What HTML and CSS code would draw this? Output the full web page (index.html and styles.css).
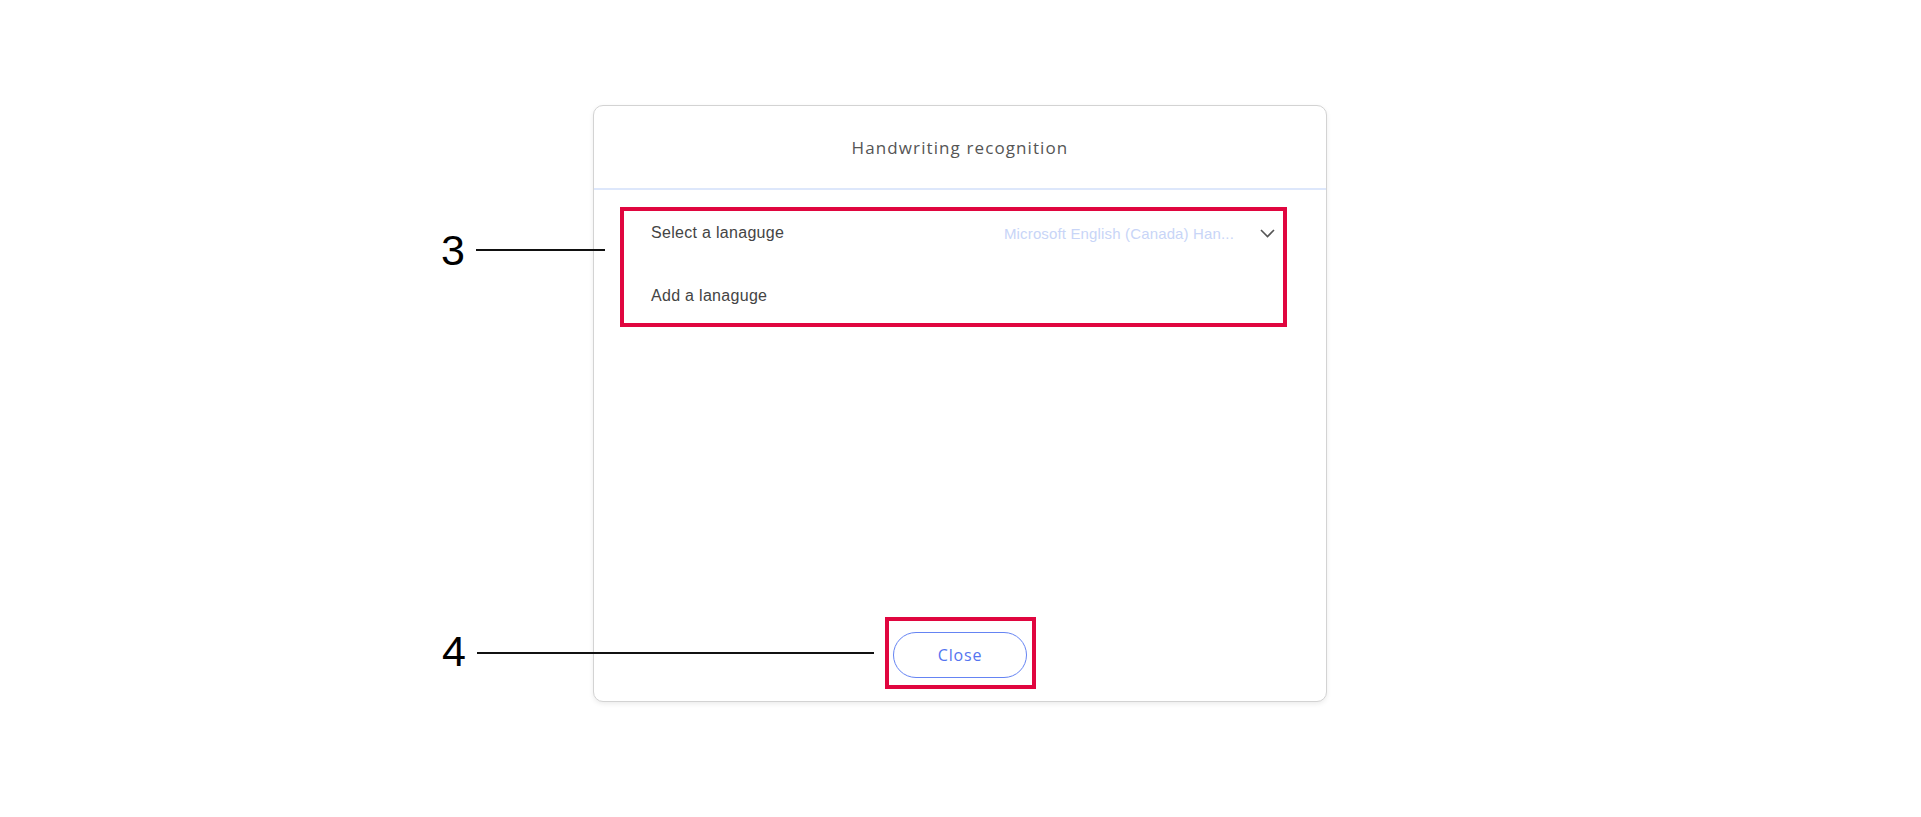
FILE: index.html
```html
<!DOCTYPE html>
<html lang="en">
<head>
    <meta charset="UTF-8">
    <meta name="viewport" content="width=device-width, initial-scale=1.0">
    <title>Handwriting recognition</title>
    <link rel="stylesheet" href="styles.css">
</head>
<body>
    <div class="stage">
        <div class="dialog">
            <div class="dialog-header">
                <h2>Handwriting recognition</h2>
            </div>

            <div class="dialog-body">
                <div class="highlight language-list">
                    <div class="row">
                        <span class="row-label">Select a lanaguge</span>
                        <span class="row-value">Microsoft English (Canada) Han...</span>
                        <svg class="chevron" width="15" height="9" viewBox="0 0 15 9">
                            <path d="M1 1 L7.5 7.5 L14 1" fill="none" stroke="#555" stroke-width="1.6"/>
                        </svg>
                    </div>
                    <div class="row">
                        <span class="row-label">Add a lanaguge</span>
                    </div>
                </div>
            </div>

            <div class="dialog-footer">
                <div class="highlight close-wrap">
                    <button type="button" class="btn-close">Close</button>
                </div>
            </div>
        </div>

        <!-- callouts -->
        <div class="callout callout-3">
            <span class="callout-num">3</span>
            <span class="leader leader-short"></span>
        </div>
        <div class="callout callout-4">
            <span class="callout-num">4</span>
            <span class="leader leader-long"></span>
        </div>
    </div>
</body>
</html>
```

FILE: styles.css
```css
body {
    margin: 0;
    background: #ffffff;
    font-family: "Liberation Sans", Arial, sans-serif;
}

.stage {
    position: relative;
    height: 817px;
    padding: 105px 0 0 593px;
    box-sizing: border-box;
}

.dialog {
    width: 734px;
    height: 597px;
    box-sizing: border-box;
    border: 1px solid #d3d3d3;
    border-radius: 10px;
    box-shadow: 0 2px 5px rgba(0, 0, 0, 0.08);
    display: flex;
    flex-direction: column;
    background: #ffffff;
}

.dialog-header {
    height: 82px;
    border-bottom: 2px solid #dde7fb;
    display: flex;
    align-items: center;
    justify-content: center;
}

.dialog-header h2 {
    margin: 0;
    font-family: "Open Sans", sans-serif;
    font-weight: 400;
    font-size: 17px;
    letter-spacing: 1.1px;
    color: #555555;
}

.dialog-body {
    padding: 17px 39px 0 26px;
}

.highlight {
    border: 4px solid #e0063f;
}

.language-list {
    height: 120px;
    box-sizing: border-box;
    padding-right: 8px;
}

.row {
    height: 44px;
    display: flex;
    align-items: center;
    padding-left: 27px;
    margin-bottom: 19px;
}

.row-label {
    font-size: 16px;
    letter-spacing: 0.3px;
    color: #444444;
}

.row-value {
    margin-left: auto;
    font-size: 15px;
    letter-spacing: 0.15px;
    color: #c8d5f7;
}

.chevron {
    margin-left: 26px;
}

.dialog-footer {
    margin-top: auto;
    padding-bottom: 12px;
    display: flex;
    justify-content: center;
}

.close-wrap {
    padding: 11px 5px 7px 4px;
    margin-left: 1px;
}

.btn-close {
    width: 134px;
    height: 46px;
    border: 1.5px solid #6584f3;
    border-radius: 23px;
    background: #ffffff;
    color: #5474f0;
    font-family: "Open Sans", sans-serif;
    font-size: 16px;
    letter-spacing: 0.8px;
    cursor: pointer;
}

.callout {
    position: absolute;
    display: flex;
    align-items: center;
    height: 50px;
}

.callout-3 {
    left: 441px;
    top: 225px;
}

.callout-4 {
    left: 442px;
    top: 626px;
}

.callout-num {
    width: 35px;
    font-size: 43px;
    line-height: 50px;
    color: #000000;
}

.leader {
    height: 2px;
    background: #111111;
}

.leader-short {
    width: 129px;
}

.leader-long {
    width: 397px;
    margin-top: 4px;
}
```
